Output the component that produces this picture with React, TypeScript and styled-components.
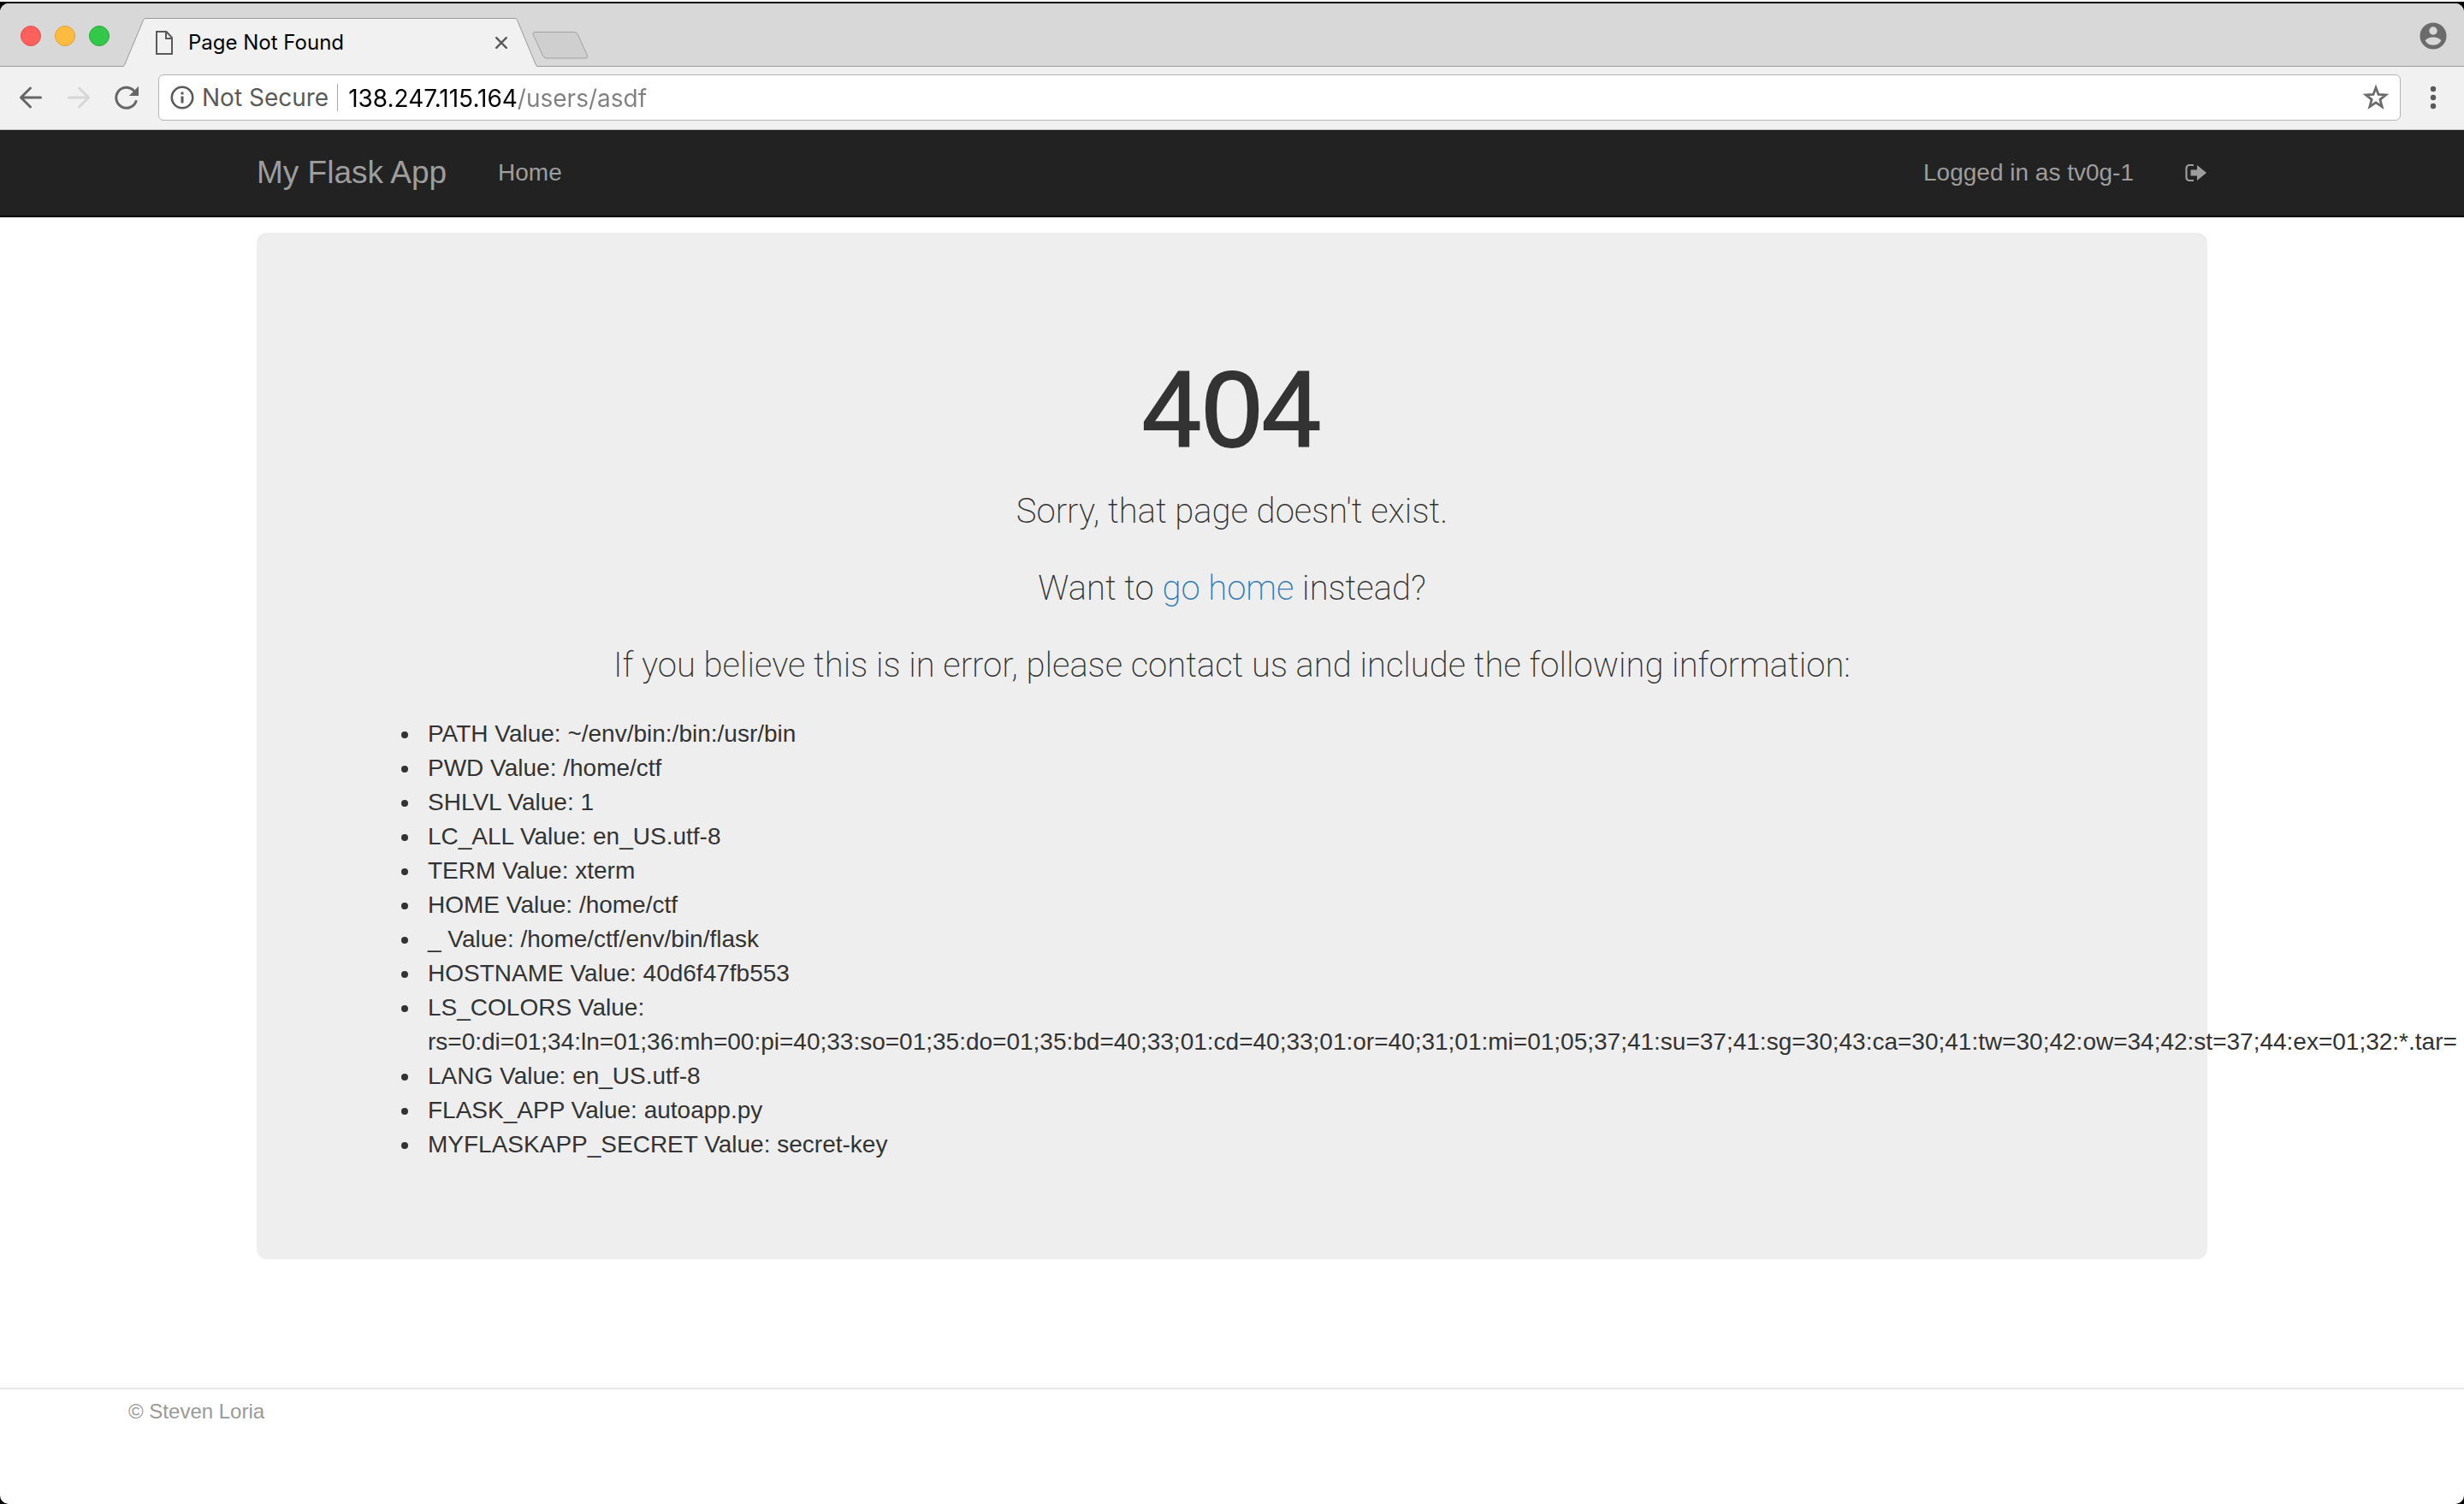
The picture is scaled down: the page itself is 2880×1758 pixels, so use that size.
import React from "react";
import styled, { createGlobalStyle } from "styled-components";

const GlobalStyle = createGlobalStyle`
  *, *::before, *::after { box-sizing: border-box; }
  html, body { margin: 0; background: #000; }
  body {
    overflow: hidden;
    border-top: 2px solid #fff;
    font-family: "Liberation Sans", Arial, sans-serif;
    font-size: 28px;
    line-height: 40px;
    color: #333;
  }
`;

const uiFont = `Inter, Roboto, sans-serif`;

const Window = styled.div`
  display: flex;
  flex-direction: column;
  min-height: calc(100vh - 4px);
  margin-top: 2px;
  border-radius: 10px;
  overflow: hidden;
  background: #fff;
`;

/* Browser chrome */

const TabStrip = styled.header`
  display: flex;
  align-items: flex-end;
  height: 74px;
  padding: 0 20px 0 24px;
  background: #d8d8d8;
  box-shadow: inset 0 -1px 0 #999;
`;

const Lights = styled.div`
  display: flex;
  align-self: center;
  gap: 16px;
  margin-right: 16px;
  padding-top: 2px;
`;

const Light = styled.button<{ $fill: string; $edge: string }>`
  width: 24px;
  height: 24px;
  padding: 0;
  border: 1px solid ${(p) => p.$edge};
  border-radius: 50%;
  background: ${(p) => p.$fill};
`;

const Tab = styled.div`
  display: flex;
  height: 57px;
`;

const TabBody = styled.div`
  display: flex;
  align-items: center;
  width: 432px;
  padding: 0 9px 0 12px;
  border-top: 1px solid #999;
  background: #f1f1f1;
  color: #000;
  font-family: ${uiFont};
  font-size: 24px;
  line-height: 30px;
`;

const TabTitle = styled.span`
  flex: 1;
  margin-left: 18px;
`;

const IconButton = styled.button`
  display: flex;
  align-items: center;
  justify-content: center;
  padding: 0;
  border: 0;
  background: none;
  color: #666;
`;

const NewTab = styled(IconButton)`
  margin: 0 auto 9px -6px;
`;

const Account = styled(IconButton)`
  align-self: center;
  padding-top: 2px;
`;

const Toolbar = styled.div`
  display: flex;
  align-items: center;
  gap: 23px;
  padding: 9px 21px 10px 22px;
  border-bottom: 1px solid #c8c8c8;
  background: #f1f1f1;
`;

const NavButtons = styled.div`
  display: flex;
  gap: 28px;
`;

const AddressBar = styled.form`
  display: flex;
  flex: 1;
  align-items: center;
  height: 54px;
  padding: 0 12px;
  border: 1px solid #b4b4b4;
  border-radius: 6px;
  background: #fff;
  color: #5a5a5a;
  font-family: ${uiFont};
  font-size: 28px;
`;

const Security = styled.label`
  margin-left: 8px;
  padding-right: 10px;
  border-right: 1px solid #a8a8a8;
  line-height: 32px;
  white-space: nowrap;
`;

const AddressInput = styled.input`
  flex: 1;
  min-width: 0;
  margin-left: 12px;
  padding: 2px 0 0;
  border: 0;
  outline: 0;
  font: inherit;
  background: linear-gradient(to right, #000 197px, #808080 197px);
  -webkit-background-clip: text;
  background-clip: text;
  color: transparent;
`;

/* Page */

const Navbar = styled.nav`
  border-bottom: 2px solid #080808;
  background: #222;
`;

const Container = styled.div`
  display: flex;
  justify-content: space-between;
  width: 100%;
  max-width: 2340px;
  margin: 0 auto;
  padding: 0 30px;
`;

const NavGroup = styled.div`
  display: flex;
  gap: 60px;
`;

const NavLink = styled.a`
  display: flex;
  align-items: center;
  height: 100px;
  color: #9d9d9d;
  text-decoration: none;
`;

const Brand = styled(NavLink)`
  font-size: 37px;
`;

const Main = styled.main`
  width: 100%;
  max-width: 2340px;
  margin: 0 auto;
  padding: 18px 30px 60px;
`;

const Jumbotron = styled.section`
  padding: 96px 120px;
  border-radius: 12px;
  background: #eee;
`;

const Heading = styled.h1`
  margin: 42px 0 20px;
  font-size: 126px;
  font-weight: 400;
  line-height: 138px;
  text-align: center;
  -webkit-text-stroke: 2px #333;
`;

const Lead = styled.p`
  margin: 0 0 30px;
  font-family: Roboto, "Liberation Sans", sans-serif;
  font-size: 40px;
  font-weight: 200;
  line-height: 60px;
  text-align: center;
`;

const LeadLink = styled.a`
  color: #337ab7;
  text-decoration: none;
`;

const Variables = styled.ul`
  margin: 0 0 18px;
  padding-left: 72px;
`;

const Variable = styled.li`
  padding-left: 8px;
`;

const Footer = styled.footer`
  margin-top: 90px;
  padding: 10px 150px 0;
  border-top: 2px solid #e7e7e7;
  color: #999;
  font-size: 24px;
  line-height: 32px;
`;

const variables: [string, string][] = [
  ["PATH", "~/env/bin:/bin:/usr/bin"],
  ["PWD", "/home/ctf"],
  ["SHLVL", "1"],
  ["LC_ALL", "en_US.utf-8"],
  ["TERM", "xterm"],
  ["HOME", "/home/ctf"],
  ["_", "/home/ctf/env/bin/flask"],
  ["HOSTNAME", "40d6f47fb553"],
  [
    "LS_COLORS",
    "rs=0:di=01;34:ln=01;36:mh=00:pi=40;33:so=01;35:do=01;35:bd=40;33;01:cd=40;33;01:or=40;31;01:mi=01;05;37;41:su=37;41:sg=30;43:ca=30;41:tw=30;42:ow=34;42:st=37;44:ex=01;32:*.tar=",
  ],
  ["LANG", "en_US.utf-8"],
  ["FLASK_APP", "autoapp.py"],
  ["MYFLASKAPP_SECRET", "secret-key"],
];

const TabEdge = ({ flip }: { flip?: boolean }) => (
  <svg width="26" height="57" viewBox="0 0 26 57" aria-hidden="true">
    <g transform={flip ? "matrix(-1 0 0 1 26 0)" : undefined}>
      <path d="M0 57 Q1 56 2 54 L23.5 2.5 Q24.5 .5 26 .5 V57Z" fill="#f1f1f1" />
      <path d="M0 56.5 Q1 56 2 54 L23.5 2.5 Q24.5 .5 26 .5" fill="none" stroke="#999" />
    </g>
  </svg>
);

const Arrow = ({ back }: { back?: boolean }) => (
  <svg width="28" height="28" viewBox="0 0 28 28" fill="none" stroke={back ? "#666" : "#d6d6d6"} strokeWidth="3" strokeLinecap="round" strokeLinejoin="round">
    <path d={back ? "M25.5 14H3M13.5 3 2.5 14l11 11" : "M2.5 14H25M14.5 3l11 11-11 11"} />
  </svg>
);

export default function App() {
  return (
    <>
      <GlobalStyle />
      <Window>
        <TabStrip>
          <Lights>
            <Light aria-label="Close window" $fill="#fc605c" $edge="#e1504b" />
            <Light aria-label="Minimize window" $fill="#fdbc40" $edge="#de9f34" />
            <Light aria-label="Zoom window" $fill="#34c84a" $edge="#27ab34" />
          </Lights>
          <Tab>
            <TabEdge />
            <TabBody>
              <svg width="20" height="28" viewBox="0 0 20 28" fill="none" stroke="#5a5a5a" strokeWidth="2" aria-hidden="true">
                <path d="M1 1h11.500l6.500 7v19H1zM12 1v8h7" />
              </svg>
              <TabTitle>Page Not Found</TabTitle>
              <IconButton aria-label="Close tab">
                <svg width="14" height="14" viewBox="0 0 14 14" stroke="#5a5a5a" strokeWidth="2.400" strokeLinecap="round">
                  <path d="M1.200 1.200l11.600 11.600M12.800 1.200L1.200 12.800" />
                </svg>
              </IconButton>
            </TabBody>
            <TabEdge flip />
          </Tab>
          <NewTab aria-label="New tab">
            <svg width="66" height="32" viewBox="0 0 66 32">
              <path d="M3 .5H49q3 0 4.500 3L64.500 28q1 3-1.500 3H17q-3 0-4.500-3L1.200 3.500Q.5.500 3 .5z" fill="#cfcfcf" stroke="#a0a0a0" />
            </svg>
          </NewTab>
          <Account aria-label="Account">
            <svg width="32" height="32" viewBox="0 0 32 32">
              <circle cx="16" cy="16" r="15.500" fill="#6b6b6b" />
              <circle cx="16" cy="10" r="4.700" fill="#d8d8d8" />
              <path d="M6.700 21.500C8 19 12.500 17.500 16 17.500s8 1.500 9.300 4C23.500 25 20 26.800 16 26.800s-7.500-1.800-9.300-5.300z" fill="#d8d8d8" />
            </svg>
          </Account>
        </TabStrip>

        <Toolbar>
          <NavButtons>
            <IconButton aria-label="Back"><Arrow back /></IconButton>
            <IconButton aria-label="Forward"><Arrow /></IconButton>
            <IconButton aria-label="Reload">
              <svg width="28" height="28" viewBox="0 0 28 28">
                <path d="M25 18.500A12 12 0 1 1 22 5.500" fill="none" stroke="#666" strokeWidth="3" strokeLinecap="round" />
                <path d="M28 .8V12H16.800z" fill="#666" />
              </svg>
            </IconButton>
          </NavButtons>
          <AddressBar>
            <svg width="30" height="30" viewBox="0 0 30 30" aria-hidden="true">
              <circle cx="15" cy="15" r="12.200" fill="none" stroke="#5a5a5a" strokeWidth="2.600" />
              <path d="M13.500 8.500h3v3h-3zM13.500 13.500h3v8h-3z" fill="#5a5a5a" />
            </svg>
            <Security htmlFor="address">Not Secure</Security>
            <AddressInput id="address" type="text" defaultValue="138.247.115.164/users/asdf" spellCheck={false} />
            <IconButton type="button" aria-label="Bookmark this page">
              <svg width="32" height="32" viewBox="0 0 32 32" fill="none" stroke="#6b6b6b" strokeWidth="2.800">
                <path d="M16 4.500l3 8 8.600.4-6.700 5.400 2.300 8.400-7.200-4.800-7.200 4.800 2.300-8.400-6.700-5.400 8.600-.4z" />
              </svg>
            </IconButton>
          </AddressBar>
          <IconButton aria-label="Menu">
            <svg width="30" height="28" viewBox="0 0 30 28" fill="#5a5a5a">
              <circle cx="15" cy="4" r="3.200" />
              <circle cx="15" cy="14" r="3.200" />
              <circle cx="15" cy="24" r="3.200" />
            </svg>
          </IconButton>
        </Toolbar>

        <Navbar>
          <Container>
            <NavGroup>
              <Brand href="#">My Flask App</Brand>
              <NavLink href="#">Home</NavLink>
            </NavGroup>
            <NavGroup>
              <NavLink href="#">Logged in as tv0g-1</NavLink>
              <NavLink href="#" aria-label="Log out">
                <svg width="26" height="22" viewBox="0 0 26 22" fill="#9d9d9d">
                  <path d="M10 2H5a3.500 3.500 0 0 0-3.500 3.500v11A3.500 3.500 0 0 0 5 20h5" fill="none" stroke="#9d9d9d" strokeWidth="2.200" />
                  <path d="M6.500 7.500H14V2l11 9-11 9v-5.500H6.500z" />
                </svg>
              </NavLink>
            </NavGroup>
          </Container>
        </Navbar>

        <Main>
          <Jumbotron>
            <Heading>404</Heading>
            <Lead>Sorry, that page doesn't exist.</Lead>
            <Lead>
              Want to <LeadLink href="#">go home</LeadLink> instead?
            </Lead>
            <Lead>If you believe this is in error, please contact us and include the following information:</Lead>
            <Variables>
              {variables.map(([name, value]) => (
                <Variable key={name}>{name} Value: {value}</Variable>
              ))}
            </Variables>
          </Jumbotron>
        </Main>

        <Footer>© Steven Loria</Footer>
      </Window>
    </>
  );
}
